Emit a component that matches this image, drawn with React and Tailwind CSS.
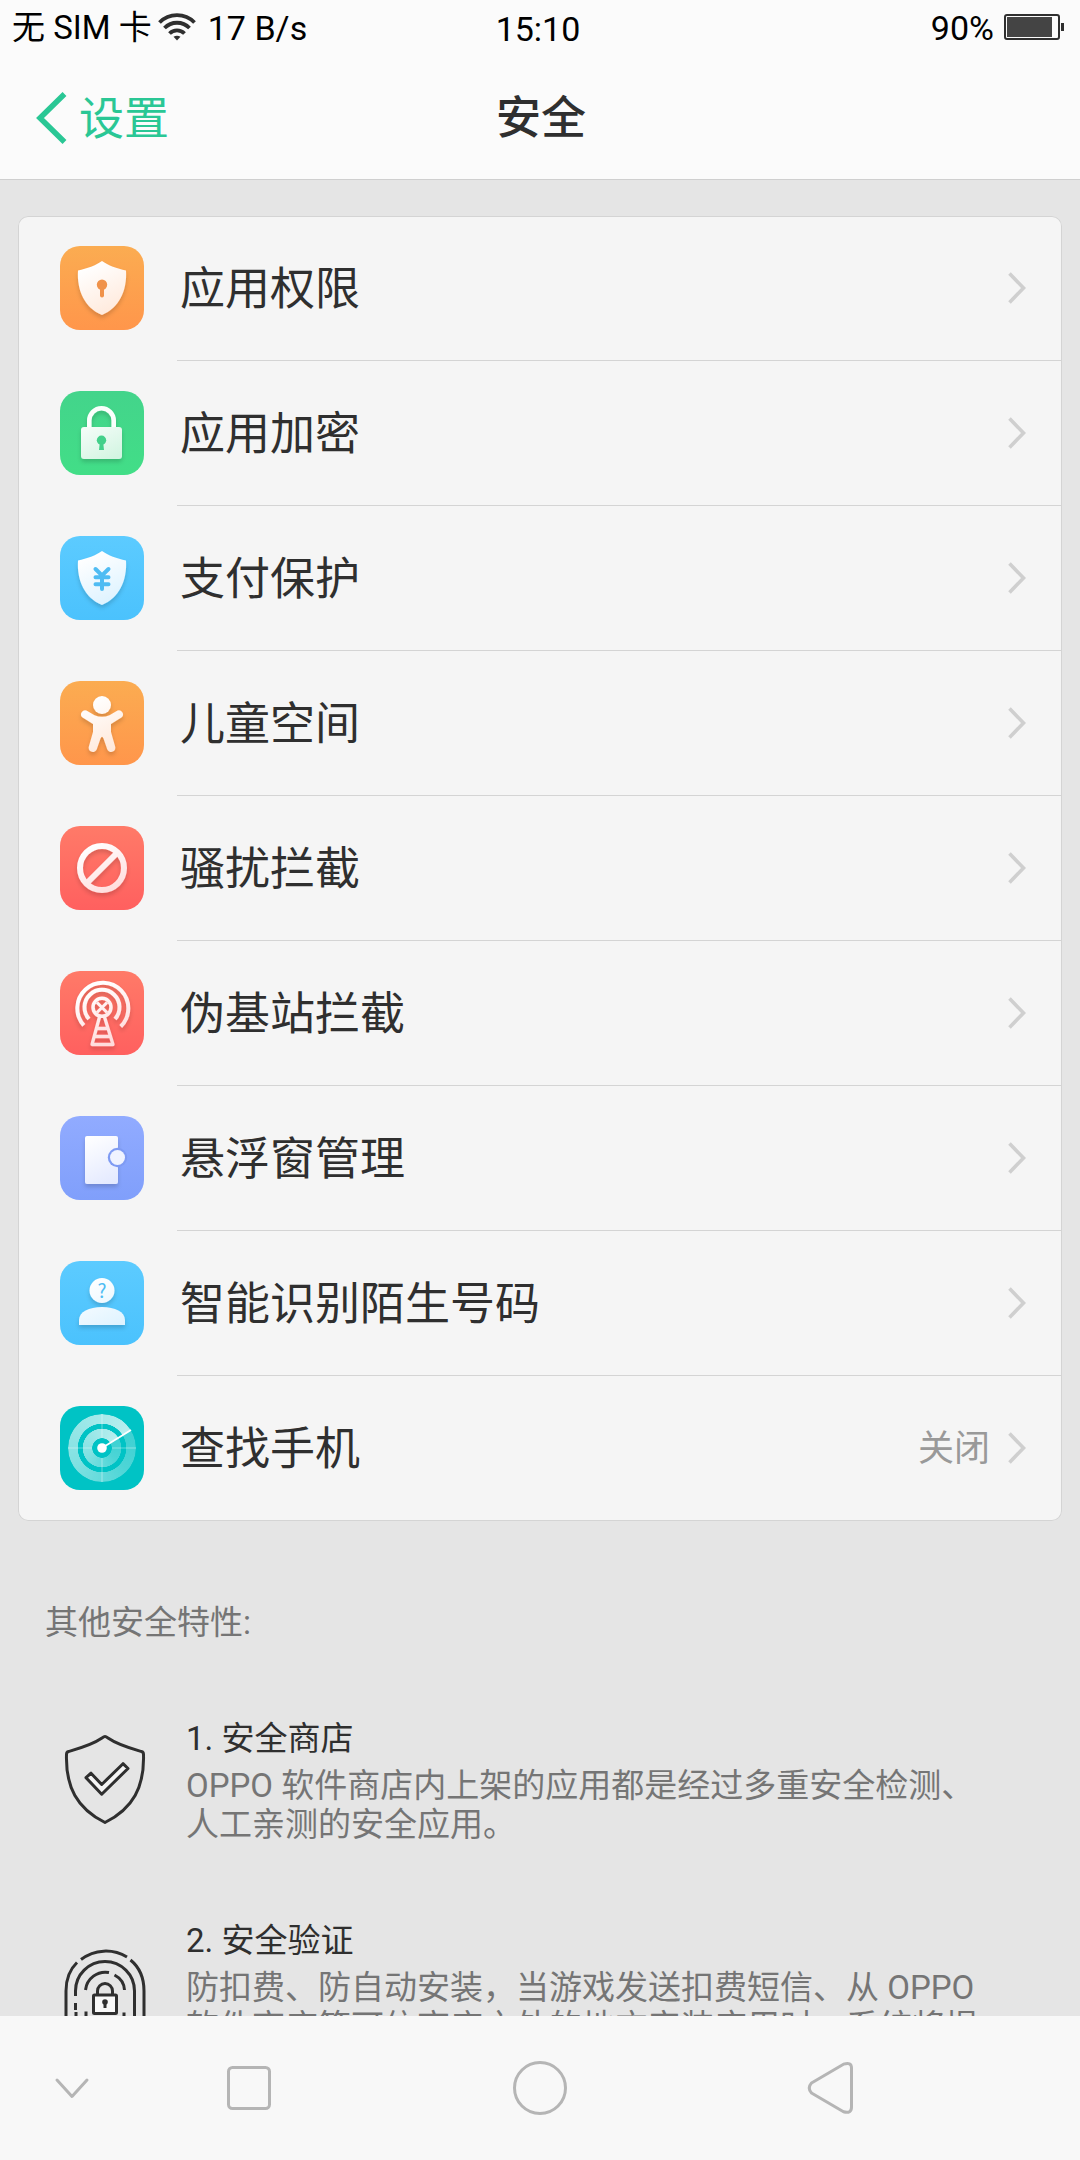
import { useId } from 'react';

const TILE_COLORS = {
  orange: ['#fbac51', '#ff964b'],
  green: ['#43d48b', '#42de87'],
  blue: ['#5ccbff', '#4bc2fd'],
  red: ['#ff7a68', '#ff605f'],
  violet: ['#91abff', '#809ffb'],
  teal: ['#00c3c5', '#00c3c5'],
};

const SHIELD = 'M42 15C48 19.500 57 22.500 66 24.500C67.300 45 59 62 42 69C25 62 16.700 45 18 24.500C27 22.500 36 19.500 42 15Z';

function Tile({ color, tint = '#ffe9db', children }) {
  const id = useId();
  const [from, to] = TILE_COLORS[color];
  return (
    <svg viewBox="0 0 84 84" className="w-21 h-21 shrink-0">
      <defs>
        <linearGradient id={`${id}bg`} x1="0" y1="0" x2="0" y2="1">
          <stop offset="0" stopColor={from} />
          <stop offset="1" stopColor={to} />
        </linearGradient>
        <linearGradient id={`${id}fg`} gradientUnits="userSpaceOnUse" x1="28" y1="20" x2="52" y2="68">
          <stop offset="0" stopColor="#fff" />
          <stop offset="1" stopColor={tint} />
        </linearGradient>
        <filter id={`${id}sh`} x="-20%" y="-20%" width="140%" height="150%">
          <feDropShadow dx="0" dy="3" stdDeviation="2" floodColor="#000" floodOpacity="0.16" />
        </filter>
      </defs>
      <rect width="84" height="84" rx="20" fill={`url(#${id}bg)`} />
      {children(`url(#${id}fg)`, `url(#${id}sh)`)}
    </svg>
  );
}

function PermissionIcon() {
  return (
    <Tile color="orange">
      {(fg, shadow) => (
        <>
          <path d={SHIELD} fill={fg} filter={shadow} />
          <circle cx="42" cy="38.800" r="5.200" fill="#f0924a" />
          <path d="M42 40V49.500" stroke="#f0924a" strokeWidth="4" strokeLinecap="round" />
        </>
      )}
    </Tile>
  );
}

function EncryptIcon() {
  return (
    <Tile color="green" tint="#d3f5e2">
      {(fg, shadow) => (
        <>
          <g filter={shadow}>
            <path d="M29.300 40V29.500a12.200 12.200 0 0 1 24.400 0V40" fill="none" stroke="#fafffc" strokeWidth="4.600" />
            <rect x="21" y="36" width="41" height="32" rx="3" fill={fg} />
          </g>
          <circle cx="41.500" cy="49.300" r="4.700" fill="#43d08a" />
          <path d="M40 50h3l1 9h-5z" fill="#43d08a" />
        </>
      )}
    </Tile>
  );
}

function PaymentIcon() {
  return (
    <Tile color="blue" tint="#dcf2ff">
      {(fg, shadow) => (
        <>
          <path d={SHIELD} fill={fg} filter={shadow} />
          <path
            d="M35.500 33L42 39.500L48.500 33M42 39.500V53M35.500 41.200H48.500M35.500 48.200H48.500"
            fill="none"
            stroke="#4fbcf3"
            strokeWidth="4"
            strokeLinecap="round"
          />
        </>
      )}
    </Tile>
  );
}

function KidsIcon() {
  return (
    <Tile color="orange">
      {(fg, shadow) => (
        <g filter={shadow} fill={fg}>
          <circle cx="42" cy="24" r="9" />
          <path d="M26.500 29.400L34.500 34.200Q42 37.500 49.500 34.200L57.500 29.400A4.200 4.200 0 0 1 61.800 36.300L51 43V51L55 65A4 4 0 0 1 47.300 68.500L43.500 57.500Q42 54 40.500 57.500L36.700 68.500A4 4 0 0 1 29 65L33 51V43L22.200 36.300A4.200 4.200 0 0 1 26.500 29.400Z" />
        </g>
      )}
    </Tile>
  );
}

function BlockIcon() {
  return (
    <Tile color="red" tint="#ffdcdc">
      {(fg, shadow) => (
        <g filter={shadow} fill="none" stroke={fg} strokeWidth="6">
          <circle cx="42" cy="42" r="22" />
          <path d="M27 57L57 27" />
        </g>
      )}
    </Tile>
  );
}

function TowerIcon() {
  return (
    <Tile color="red" tint="#ffdcdc">
      {(fg, shadow) => (
        <g filter={shadow} fill="none" stroke={fg}>
          <path d="M23.800 54.300A25.500 25.500 0 1 1 60.700 55.500" strokeWidth="4" />
          <path d="M29 48A17.500 17.500 0 1 1 55 48" strokeWidth="4" />
          <circle cx="42" cy="36.300" r="9" strokeWidth="3.500" />
          <path d="M37 31.500L47 41.500M47 31.500L37 41.500" strokeWidth="3" />
          <path d="M39.500 46L32 73.500H53L44.500 46M36.500 57.500H47.500M34.500 65.500H49.500" strokeWidth="3.300" strokeLinejoin="round" />
        </g>
      )}
    </Tile>
  );
}

function FloatingIcon() {
  return (
    <Tile color="violet" tint="#e3e9ff">
      {(fg, shadow) => (
        <>
          <rect x="25" y="20" width="33" height="48" rx="2" fill={fg} filter={shadow} />
          <circle cx="57.500" cy="41.500" r="9.700" fill="#7f9bf3" />
          <circle cx="57.500" cy="41.500" r="7.500" fill="#f0f3ff" />
        </>
      )}
    </Tile>
  );
}

function CallerIcon() {
  return (
    <Tile color="blue" tint="#dff3ff">
      {(fg, shadow) => (
        <>
          <g filter={shadow} fill={fg}>
            <circle cx="42" cy="29.500" r="12.500" />
            <path d="M19 64V59C19 51 29 46 42 46S65 51 65 59V64Z" />
          </g>
          <text x="42" y="36.500" textAnchor="middle" fontSize="19" fill="#4fbcf3" className="font-['Noto_Sans_CJK_SC',sans-serif]">?</text>
        </>
      )}
    </Tile>
  );
}

function RadarIcon() {
  return (
    <Tile color="teal">
      {() => (
        <>
          <foreignObject x="8" y="8" width="68" height="68">
            <div className="size-[68px] rounded-full bg-[conic-gradient(from_58deg,rgba(255,255,255,0.24),rgba(255,255,255,0.3)_20%,rgba(255,255,255,0.5)_50%,rgba(255,255,255,0.72))] [mask-image:radial-gradient(circle,transparent_9.5px,#000_10px,#000_19px,transparent_19.5px,transparent_24px,#000_24.5px)]" />
          </foreignObject>
          <path d="M42 8V32M42 52V76M8 42H32M52 42H76" stroke="#fff" strokeOpacity="0.250" strokeWidth="1.600" />
          <path d="M42 42L71 24" stroke="#fff" strokeWidth="1.800" />
          <circle cx="42" cy="42" r="4.800" fill="#fff" />
        </>
      )}
    </Tile>
  );
}

const ITEMS = [
  { label: '应用权限', Icon: PermissionIcon },
  { label: '应用加密', Icon: EncryptIcon },
  { label: '支付保护', Icon: PaymentIcon },
  { label: '儿童空间', Icon: KidsIcon },
  { label: '骚扰拦截', Icon: BlockIcon },
  { label: '伪基站拦截', Icon: TowerIcon },
  { label: '悬浮窗管理', Icon: FloatingIcon },
  { label: '智能识别陌生号码', Icon: CallerIcon },
  { label: '查找手机', Icon: RadarIcon, value: '关闭' },
];

function StatusBar() {
  return (
    <div className="grid grid-cols-3 items-center h-14 pl-3 pr-4 text-[34px] leading-[38px] text-black">
      <div className="flex items-center whitespace-nowrap">
        <span className="text-[33px]">无 SIM 卡</span>
        <svg viewBox="0 0 38 28" className="w-[38px] h-7 ml-1.5 mb-0.5" fill="none" stroke="#2f2f2f" strokeWidth="3.800">
          <path d="M1.500 9.500A24.500 24.500 0 0 1 36.500 9.500" />
          <path d="M6.500 15A17.500 17.500 0 0 1 31.500 15" />
          <path d="M11.500 20.500A10.500 10.500 0 0 1 26.500 20.500" />
          <path d="M15.500 23.800Q19 21.800 22.500 23.800L19 27.500Z" fill="#2f2f2f" stroke="none" />
        </svg>
        <span className="ml-3">17 B/s</span>
      </div>
      <span className="pt-0.5 text-center">15:10</span>
      <div className="flex items-center justify-end gap-2.5">
        <span>90%</span>
        <svg viewBox="0 0 60 26" className="w-15 h-[26px] mb-0.5">
          <rect x="1" y="1" width="54" height="24" rx="2" fill="none" stroke="#2f2f2f" strokeWidth="2" />
          <rect x="3" y="3" width="45" height="20" fill="#444" />
          <rect x="57" y="9" width="3" height="8" fill="#2f2f2f" />
        </svg>
      </div>
    </div>
  );
}

function TitleBar() {
  return (
    <div className="grid grid-cols-3 items-center h-[123px] pl-9 text-[45px]">
      <button className="flex items-center gap-3 text-[#2ac795]">
        <svg viewBox="0 0 31 52" className="w-[31px] h-13" fill="none" stroke="currentColor" strokeWidth="5.500">
          <path d="M28.500 2L4 26L28.500 50" />
        </svg>
        <span className="pt-1">设置</span>
      </button>
      <h1 className="pt-0.5 pr-[34px] text-center font-medium text-[#2f2f2f]">安全</h1>
    </div>
  );
}

function SettingRow({ item, last }) {
  const { label, Icon, value } = item;
  return (
    <li className="flex h-[145px] pl-[42px]">
      <div className="flex items-center h-36 w-[117px]">
        <Icon />
      </div>
      <div className={`flex flex-1 items-center pl-[3px] pr-9 border-b ${last ? 'border-transparent' : 'border-[#d4d4d4]'}`}>
        <span className="flex-1 pt-1 text-[45px] text-[#2f2f2f]">{label}</span>
        {value && <span className="pt-0.5 text-4xl text-[#999] mr-[18px]">{value}</span>}
        <svg viewBox="0 0 18 32" className="w-[18px] h-8" fill="none" stroke="#cfcfcf" strokeWidth="3.600">
          <path d="M1.500 1.500L15.500 16L1.500 30.500" />
        </svg>
      </div>
    </li>
  );
}

function ShieldCheckIcon() {
  return (
    <svg viewBox="0 0 82 92" className="w-[82px] h-23" fill="none" stroke="#2f2f2f" strokeWidth="3" strokeLinejoin="round">
      <path d="M41 3.500Q40 3.500 38 5C28 12 15 15.500 4.500 18.500Q2.500 19 2.500 21.500C1.500 54 13 75.500 41 89.500C69 75.500 80.500 54 79.500 21.500Q79.500 19 77.500 18.500C67 15.500 54 12 44 5Q42 3.500 41 3.500Z" />
      <path d="M22 44.700L27 40.200L37.700 51.500L59 30.700L64 35.500L37.700 61.200Z" fill="#f5f5f5" />
    </svg>
  );
}

function FingerprintIcon() {
  return (
    <svg viewBox="0 0 82 92" className="w-[82px] h-23" fill="none" stroke="#2f2f2f" strokeWidth="3">
      <path d="M17 10.500A41 41 0 0 1 63 8M13 13.500Q2 24 2 42V70M66.500 11Q80 22 80 42V70" />
      <path d="M11.500 47V42A29.500 29.500 0 0 1 70.500 42V70M11.500 54V61M12 63V72" />
      <path d="M21.500 41A20 20 0 0 1 45 23.500M50.500 26Q60 31 60.500 41M22 62.500V72M60 63.500V72" />
      <path d="M33.500 45V42A7.500 7.500 0 0 1 48.500 42V45" />
      <rect x="29.500" y="46" width="23" height="18.500" rx="1" fill="#f8f8f8" />
      <circle cx="41" cy="53" r="2.800" fill="#2f2f2f" stroke="none" />
      <path d="M41 53V59" />
    </svg>
  );
}

function Feature({ icon, title, lines }) {
  return (
    <div className="flex items-start h-[125px] mb-[77px] pl-16">
      <div className="w-[122px] shrink-0">{icon}</div>
      <div className="text-[33px] leading-[39px] whitespace-nowrap">
        <h3 className="text-[#2f2f2f] mb-2">{title}</h3>
        {lines.map((line) => (
          <p key={line} className="text-[#757575]">{line}</p>
        ))}
      </div>
    </div>
  );
}

function NavBar() {
  return (
    <nav className="h-36 bg-[#f8f8f8]">
      <svg viewBox="0 0 1080 144" className="w-full h-full" fill="none" stroke="#b5b5b5" strokeWidth="3" strokeLinecap="round" strokeLinejoin="round">
        <path d="M57 64L72 80.500L87 64" />
        <rect x="228.500" y="51.500" width="41" height="41" rx="4" />
        <circle cx="540" cy="72" r="25.500" />
        <path d="M811.500 67L843.500 48.200Q851.500 45.500 851.500 52V91Q851.500 98 843.500 95.800L811.500 77Q807 72 811.500 67Z" />
      </svg>
    </nav>
  );
}

export default function App() {
  return (
    <div className="flex flex-col w-[1080px] h-[2160px] overflow-hidden bg-[#e5e5e5] font-['Roboto','Noto_Sans_CJK_SC',sans-serif]">
      <header className="shrink-0 h-45 bg-[#fbfbfb] border-b border-[#cfcfcf]">
        <StatusBar />
        <TitleBar />
      </header>

      <main className="flex-1 min-h-0 overflow-hidden pt-9">
        <ul className="mx-[18px] rounded-[10px] bg-[#f5f5f5] shadow-[inset_0_0_0_1px_#d4d4d4]">
          {ITEMS.map((item, i) => (
            <SettingRow key={item.label} item={item} last={i === ITEMS.length - 1} />
          ))}
        </ul>

        <h2 className="pl-[45px] mt-[82px] mb-[76px] text-[33px] leading-[40px] text-[#757575]">其他安全特性:</h2>

        <Feature
          icon={<div className="pt-3.5"><ShieldCheckIcon /></div>}
          title="1. 安全商店"
          lines={['OPPO 软件商店内上架的应用都是经过多重安全检测、', '人工亲测的安全应用。']}
        />
        <Feature
          icon={<div className="pt-7"><FingerprintIcon /></div>}
          title="2. 安全验证"
          lines={['防扣费、防自动安装，当游戏发送扣费短信、从 OPPO', '软件商店等可信商店之外的地方安装应用时，系统将提']}
        />
      </main>

      <NavBar />
    </div>
  );
}
